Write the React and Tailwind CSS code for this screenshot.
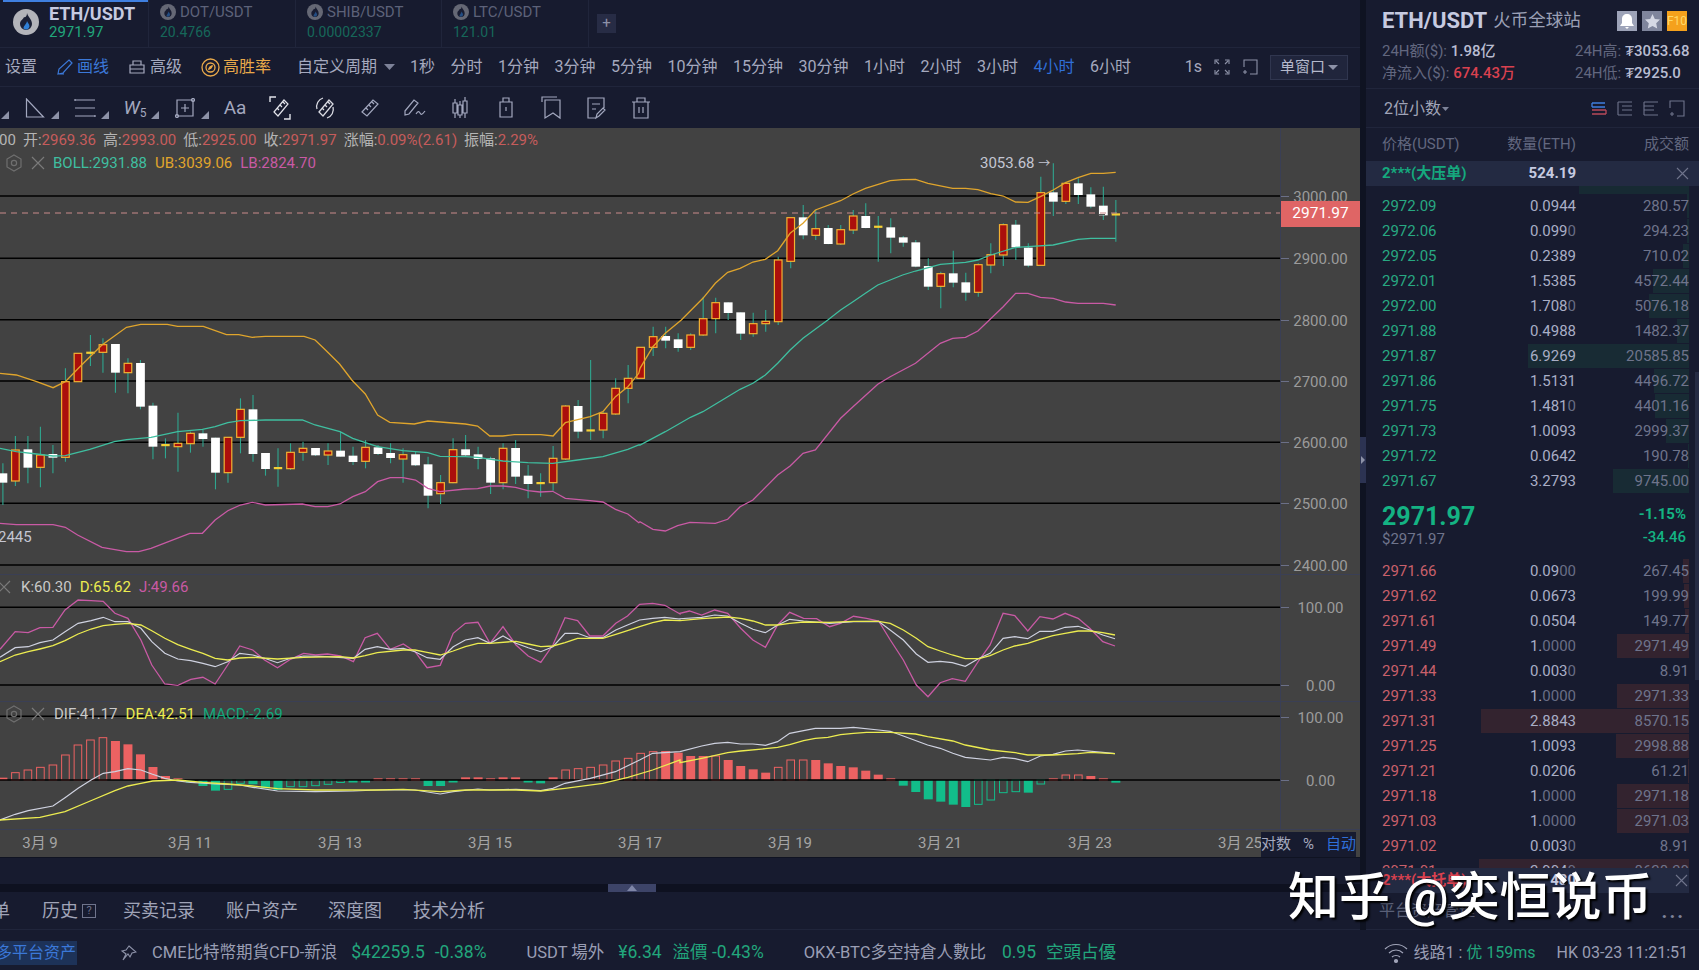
import React from 'react';

// candle data read off the chart: [bodyTop, bodyBottom, wickTop, wickBottom, kind], y in crop units
const CANDLES = [
  [1030,1058,1000,1125,'w'],[960,1053,918,1068,'r'],[958,1013,918,1060,'w'],[975,1012,890,1072,'r'],[972,983,945,1030,'w'],
  [755,982,715,995,'r'],[670,755,670,755,'r'],[668,668,615,708,'d'],[644,667,625,728,'r'],[642,728,642,788,'w'],
  [700,728,685,790,'r'],[699,830,690,838,'w'],[827,950,818,988,'w'],[945,945,925,985,'d'],[940,950,848,1025,'r'],
  [910,941,905,968,'r'],[910,927,900,950,'w'],[923,1028,923,1078,'w'],[922,1028,922,1058,'r'],[838,922,805,970,'r'],
  [838,972,795,995,'w'],[969,1017,969,1037,'w'],[1014,1014,955,1070,'d'],[967,1016,940,1020,'r'],[955,967,935,992,'r'],
  [954,976,954,978,'w'],[963,975,940,1005,'r'],[962,980,905,980,'w'],[977,996,950,1005,'w'],[952,994,930,1015,'r'],
  [952,972,945,975,'w'],[969,984,940,1000,'w'],[974,987,955,1058,'r'],[973,1006,965,1008,'w'],[1003,1097,980,1135,'w'],
  [1058,1091,1035,1122,'r'],[959,1058,925,1060,'r'],[958,976,915,978,'w'],[973,987,950,1018,'w'],[985,1058,980,1092,'w'],
  [955,1058,940,1078,'r'],[954,1040,930,1062,'w'],[1037,1062,1005,1105,'w'],[1059,1059,1030,1100,'d'],[985,1058,948,1082,'r'],
  [828,987,825,990,'r'],[828,905,810,925,'w'],[901,901,690,930,'d'],[850,900,845,925,'r'],[775,852,745,855,'r'],
  [745,775,705,820,'r'],[652,745,652,745,'r'],[620,652,590,678,'r'],[618,632,590,655,'w'],[628,654,610,665,'w'],
  [615,652,610,660,'r'],[566,615,500,618,'r'],[518,566,503,610,'r'],[517,549,517,570,'w'],[547,611,547,630,'w'],
  [581,611,548,620,'r'],[574,581,540,605,'r'],[390,575,380,585,'r'],[263,394,263,415,'r'],[262,316,225,328,'w'],
  [296,316,240,330,'r'],[294,342,285,343,'w'],[299,342,285,345,'r'],[258,300,240,312,'r'],[258,294,220,295,'w'],
  [290,290,258,395,'d'],[292,323,265,370,'w'],[322,338,318,350,'w'],[337,410,330,412,'w'],[408,470,385,480,'w'],
  [431,469,425,535,'r'],[430,458,362,472,'w'],[457,488,428,512,'w'],[404,487,400,500,'r'],[374,405,340,430,'r'],
  [284,375,280,408,'r'],[284,352,270,390,'w'],[353,407,340,412,'w'],[188,406,140,406,'r'],[187,215,100,258,'w'],
  [160,214,155,222,'r'],[160,195,145,222,'w'],[193,230,172,235,'w'],[227,256,170,270,'w'],[253,253,210,335,'d'],
];

const pts = (a, ox, fx, oy) => {
  const out = [];
  for (let i = 0; i < a.length; i += 2) out.push(`${(ox + a[i] / fx).toFixed(1)},${(oy + a[i + 1] / 3).toFixed(1)}`);
  return out;
};
const main = (l, r) => [...pts(l, 0, 2.45, 130), ...pts(r, 640, 2.178, 130)].join(' ');
const sub = (l, r) => [...pts(l, 0, 2.306, 570), ...pts(r, 680, 2.306, 570)].join(' ');

const UB = main(
  [0,730,40,735,90,755,130,773,160,755,200,705,250,645,310,592,345,583,410,583,435,589,498,589,555,614,585,614,618,622,650,619,745,619,772,630,800,663,832,702,862,750,895,792,925,855,955,877,1015,882,1048,873,1140,882,1170,888,1200,918,1232,918,1260,914,1325,914,1355,918,1385,878,1446,860,1477,845,1508,800,1538,770,1565,730],
  [0,715,28,650,55,610,90,570,137,505,164,460,191,427,218,415,246,396,273,388,300,362,327,310,355,280,382,240,437,212,464,192,491,175,545,152,572,149,600,148,627,160,681,175,709,175,736,179,764,191,791,198,818,216,845,217,872,200,900,180,927,158,954,143,982,130,1009,130,1036,127]
);
const BOLL = main(
  [0,955,40,965,90,972,130,978,160,977,220,958,280,935,310,929,370,922,435,905,496,898,527,890,558,878,589,872,650,870,741,870,772,885,833,905,864,925,925,950,987,962,1048,968,1078,979,1140,980,1170,982,1232,993,1293,998,1354,1000,1415,990,1477,980,1538,958,1565,945],
  [0,945,55,905,110,862,137,845,191,800,218,778,246,760,273,735,300,700,327,660,355,625,409,570,437,540,464,515,491,490,518,465,572,435,600,423,654,403,709,397,736,390,764,375,818,352,845,350,900,345,954,328,982,325,1036,325]
);
const LB = main(
  [0,1180,40,1184,130,1184,160,1192,190,1215,250,1252,310,1265,340,1265,370,1255,465,1210,496,1210,527,1170,558,1142,589,1125,618,1117,650,1125,741,1122,772,1130,803,1130,833,1122,864,1100,895,1085,925,1055,956,1043,987,1043,1018,1050,1048,1075,1078,1085,1140,1077,1170,1076,1201,1068,1232,1068,1263,1072,1293,1082,1323,1086,1354,1084,1385,1105,1446,1112,1477,1116,1508,1138,1538,1152,1565,1178],
  [0,1175,28,1198,55,1203,82,1187,109,1177,164,1180,191,1168,218,1130,246,1110,300,1035,327,1008,355,970,382,960,437,865,464,830,518,763,545,740,600,700,654,640,681,625,709,622,736,603,791,530,818,490,845,490,872,502,900,505,927,516,954,520,1009,520,1036,525]
);

const J = sub(
  [0,238,35,185,65,188,92,173,122,172,150,120,180,90,210,92,238,94,265,130,295,145,325,210,350,285,380,342,410,346,440,328,468,322,496,342,525,285,553,228,583,240,610,270,640,293,670,268,700,250,728,255,755,252,785,258,815,275,842,203,870,190,900,238,930,222,957,245,985,293,1015,286,1045,190,1073,160,1102,157,1130,220,1160,170,1190,225,1218,258,1247,277,1275,225,1303,143,1332,152,1360,198,1390,198,1420,160,1447,138,1475,103,1505,100,1533,106,1568,132],
  [0,130,22,123,50,135,80,120,110,130,140,175,168,210,197,232,225,165,253,127,285,145,315,146,345,170,370,160,400,139,430,145,458,153,485,210,515,270,545,345,572,380,600,338,628,326,658,334,690,270,715,225,745,130,772,137,802,183,830,140,860,147,888,130,918,145,945,175,975,215,1003,228]
);
const K = sub(
  [0,262,35,233,65,230,92,218,122,210,150,185,180,160,210,152,238,142,265,155,295,155,325,175,350,215,380,250,410,267,440,272,468,280,496,290,525,275,553,250,583,255,610,265,640,278,670,265,700,258,755,260,815,265,842,238,870,230,900,238,930,235,957,245,985,263,1015,268,1045,230,1073,210,1102,203,1130,220,1160,198,1190,220,1218,233,1247,245,1275,230,1303,190,1332,190,1360,203,1390,203,1420,180,1447,165,1475,150,1505,145,1533,142,1568,147],
  [0,146,50,142,80,135,110,138,140,160,168,178,197,188,225,165,253,148,285,153,345,160,400,155,458,154,515,210,545,252,572,277,600,274,628,278,658,289,690,265,715,250,745,205,772,200,802,206,830,184,860,184,888,172,918,169,945,180,975,195,1003,206]
);
const D = sub(
  [0,275,35,255,65,245,92,237,122,227,150,212,180,192,210,177,238,167,265,163,295,160,325,165,350,182,380,205,410,224,440,238,468,250,496,265,525,270,553,264,583,262,640,267,700,262,785,260,815,264,842,257,870,248,930,240,957,240,985,247,1015,255,1045,243,1073,230,1102,220,1130,220,1190,214,1218,222,1247,230,1275,228,1303,218,1332,205,1390,205,1420,193,1447,182,1475,170,1505,158,1533,150,1568,152],
  [0,152,50,146,110,141,140,145,168,153,197,165,225,165,253,160,285,156,345,157,400,154,458,154,485,160,515,180,545,205,572,230,600,243,628,255,658,266,690,266,715,257,745,240,772,228,802,220,830,208,860,197,888,190,918,183,945,183,975,188,1003,195]
);
const DIF = sub(
  [0,750,35,733,65,722,122,708,150,683,180,655,210,630,238,610,265,605,295,596,325,600,350,612,380,625,410,633,440,637,496,642,525,643,553,645,583,652,640,663,727,665,815,663,870,660,957,660,1015,672,1045,665,1102,657,1130,660,1190,658,1247,662,1275,655,1303,640,1361,625,1419,605,1475,570,1505,550,1568,545],
  [0,545,50,528,80,520,110,517,140,522,168,522,197,526,225,515,253,490,285,482,312,475,370,475,400,472,458,480,485,484,515,498,571,525,600,535,629,550,658,562,716,570,745,562,773,566,802,575,831,558,860,553,889,543,917,540,975,547,1003,551]
);
const DEA = sub(
  [0,750,92,742,150,725,208,693,265,662,295,648,325,640,352,633,410,630,467,637,525,642,583,648,640,656,727,660,870,660,930,658,1015,665,1073,660,1190,660,1247,663,1303,655,1390,640,1448,622,1505,600,1568,570],
  [0,578,50,565,110,548,140,543,197,536,225,532,253,524,285,512,312,505,341,502,370,494,400,490,430,487,485,487,543,492,571,500,629,513,658,525,716,540,773,548,802,555,860,555,917,551,946,547,1003,551]
);

// macd bars: [end y in crop units, filled]
const HIST = [
  [623,1],[608,0],[600,0],[592,0],[585,0],[555,0],[525,0],[510,0],[503,0],[513,1],[523,1],[553,1],[591,1],[618,1],[625,1],
  [636,1],[648,1],[662,1],[658,0],[640,0],[643,1],[655,1],[660,1],[650,0],[650,0],[647,0],[643,0],[637,0],[637,1],[635,1],
  [625,1],[625,1],[625,1],[625,1],[648,1],[648,1],[636,1],[622,1],[622,1],[625,1],[622,1],[622,1],[636,1],[640,1],[622,1],
  [600,0],[596,0],[592,0],[585,0],[573,0],[565,0],[550,0],[545,0],[543,1],[548,1],[558,1],[558,1],[558,0],[570,1],[588,1],
  [598,1],[608,1],[592,0],[570,0],[570,0],[570,1],[580,1],[588,1],[592,1],[602,1],[614,1],[625,1],[647,1],[666,1],[688,1],
  [695,1],[704,1],[711,1],[703,0],[690,0],[668,0],[665,0],[668,1],[642,0],[625,1],[615,0],[615,0],[618,1],[625,1],[638,1],
];

const ASKS = [
  ['2972.09','0.0944','280.57'],['2972.06','0.0990','294.23'],['2972.05','0.2389','710.02'],['2972.01','1.5385','4572.44'],
  ['2972.00','1.7080','5076.18'],['2971.88','0.4988','1482.37'],['2971.87','6.9269','20585.85'],['2971.86','1.5131','4496.72'],
  ['2971.75','1.4810','4401.16'],['2971.73','1.0093','2999.37'],['2971.72','0.0642','190.78'],['2971.67','3.2793','9745.00'],
];
const BIDS = [
  ['2971.66','0.0900','267.45'],['2971.62','0.0673','199.99'],['2971.61','0.0504','149.77'],['2971.49','1.0000','2971.49'],
  ['2971.44','0.0030','8.91'],['2971.33','1.0000','2971.33'],['2971.31','2.8843','8570.15'],['2971.25','1.0093','2998.88'],
  ['2971.21','0.0206','61.21'],['2971.18','1.0000','2971.18'],['2971.03','1.0000','2971.03'],['2971.02','0.0030','8.91'],
  ['2971.01','2.9040','8628.30'],
];

const PERIODS = ['1秒','分时','1分钟','3分钟','5分钟','10分钟','15分钟','30分钟','1小时','2小时','3小时','4小时','6小时'];
const DATES = ['3月 9','3月 11','3月 13','3月 15','3月 17','3月 19','3月 21','3月 23','3月 25'];

const GEAR = (
  <svg width="16" height="18" viewBox="0 0 16 18" fill="none" stroke="#6f6f6f" strokeWidth="1.2">
    <path d="M8 1l7 4v8l-7 4-7-4V5z" /><circle cx="8" cy="9" r="2.6" />
  </svg>
);
const CROSS = (
  <svg width="14" height="14" viewBox="0 0 14 14" stroke="#7a7a7a" strokeWidth="1.2"><path d="M1 1l12 12M13 1L1 13" /></svg>
);

const Flame = ({ size, dim }) => (
  <svg width={size} height={size} viewBox="0 0 26 26" className={dim ? 'opacity-50' : ''}>
    <circle cx="13" cy="13" r="13" fill="#b3b4ba" />
    <path d="M14 4c1 4 5 6 5 11a6 6 0 0 1-12 0c0-4 3-4 4-7 2 1 3-2 3-4z" fill="#1b2036" />
    <path d="M14 12c.5 2 2.500 3 2.500 5.500a3.500 3.500 0 0 1-6 2c0-3 3-4 3.500-7.500z" fill="#2f7fd6" />
  </svg>
);

const Tool = ({ w = 'w-[45.2px]', corner, children }) => (
  <div className={`relative flex h-full shrink-0 items-center justify-center ${w}`}>
    {children}
    {corner && (
      <svg width="8" height="8" viewBox="0 0 8 8" className="absolute bottom-[9px] right-[1px]"><path d="M8 0v8H0z" fill="#8d92a8" /></svg>
    )}
  </div>
);

const ic = { fill: 'none', stroke: '#a3a8bf', strokeWidth: 1.2 };

const Candles = () => (
  <>
    {CANDLES.map((c, i) => {
      const x = 2.9 + i * 12.505;
      const [t, b, wt, wb, k] = c;
      const yt = 130 + t / 3;
      const yb = 130 + b / 3;
      return (
        <g key={i}>
          <line x1={x} x2={x} y1={130 + wt / 3} y2={130 + wb / 3} stroke="#2fa68f" strokeWidth="1.1" />
          {k === 'd' && <rect x={x - 4.2} y={yt - 1} width="8.4" height="2.2" fill="#f4cf35" />}
          {k === 'w' && <rect x={x - 4.4} y={yt} width="8.8" height={yb - yt} fill="#fff" />}
          {k === 'r' && <rect x={x - 3.8} y={yt} width="7.6" height={yb - yt} fill="#ab0f0c" stroke="#f3b233" strokeWidth="1.2" />}
        </g>
      );
    })}
    <line x1={1099} x2={1105} y1={214.500} y2={214.500} stroke="#555" strokeWidth="1" />
  </>
);

const GridLine = ({ y }) => <line x1="0" x2="1280" y1={y} y2={y} stroke="#000" strokeWidth="1.500" />;

const AxisLabel = ({ y, top, text }) => (
  <>
    <div className="absolute left-0 h-px w-[8px] bg-[#6b7088]" style={{ top: y - top }} />
    <div className="absolute inset-x-0 -translate-y-1/2 text-center text-[15px] leading-5 text-[#9b9b9b]" style={{ top: y - top + 1 }}>{text}</div>
  </>
);

const Dim = ({ v }) => {
  const m = v.match(/^(.*?)(0*)$/);
  return <>{m[1]}<span className="text-[#696e86]">{m[2]}</span></>;
};

const BookRow = ({ row, color, bar, scale }) => (
  <div className="relative grid h-[25px] shrink-0 grid-cols-[110px_84px_113px] items-center text-[15px] leading-[25px]">
    <div className={`absolute inset-y-[0.5px] right-0 ${bar}`} style={{ width: parseFloat(row[2]) * scale }} />
    <div className={`relative ${color}`}>{row[0]}</div>
    <div className="relative text-right text-[#a9aec6]"><Dim v={row[1]} /></div>
    <div className="relative text-right text-[#6f748c]">{row[2]}</div>
  </div>
);

const App = () => {
  return (
    <div className="relative h-[970px] w-[1699px] overflow-hidden bg-[#171b2f] [font-family:Roboto,'Noto_Sans_CJK_SC',sans-serif]">
      <div className="flex h-[930px]">
        {/* left side */}
        <div className="flex w-[1360px] shrink-0 flex-col">
          {/* symbol tabs */}
          <div className="flex h-[48px] shrink-0 items-center border-b border-[#20253b]">
            <div className="relative flex h-full w-[149px] items-center gap-[10px] border-r border-[#20253b] pb-[3px] pl-[13px]">
              <div className="absolute left-[3px] right-0 top-0 h-[2px] bg-[#3f7fe0]" />
              <Flame size={26} />
              <div className="flex flex-col">
                <span className="text-[18px] font-bold leading-[20px] text-[#c6cae0]">ETH/USDT</span>
                <span className="text-[15px] leading-[17px] text-[#22a67c]">2971.97</span>
              </div>
            </div>
            {[['DOT/USDT','20.4766','w-[147px]'],['SHIB/USDT','0.00002337','w-[146px]'],['LTC/USDT','121.01','w-[147px]']].map(t => (
              <div key={t[0]} className={`flex h-full flex-col justify-center border-r border-[#20253b] pb-[3px] pl-[11px] ${t[2]}`}>
                <div className="flex items-center gap-[4px] text-[15px] leading-[20px] text-[#5d6279]">
                  <Flame size={16} dim />
                  {t[0]}
                </div>
                <div className="text-[14px] leading-[20px] text-[#16675a]">{t[1]}</div>
              </div>
            ))}
            <div className="ml-[8px] flex h-[19px] w-[19px] items-center justify-center bg-[#272c45] text-[15px] leading-none text-[#8d92a8]">+</div>
          </div>

          {/* period toolbar */}
          <div className="flex h-[39px] shrink-0 items-center border-b border-[#20253b] pl-[5px] pr-[12px] text-[16px] leading-none text-[#a5a9be]">
            <span>设置</span>
            <span className="ml-[19px] flex items-center gap-[3px] text-[#3b78d8]">
              <svg width="18" height="18" viewBox="0 0 18 18" fill="none" stroke="#3b78d8" strokeWidth="1.2"><path d="M13 2l3 3-9 10-5 1 1-5zM2 16h6" /></svg>
              画线
            </span>
            <span className="ml-[20px] flex items-center gap-[5px]">
              <svg width="16" height="16" viewBox="0 0 16 16" fill="none" stroke="#a5a9be" strokeWidth="1.2"><path d="M4 2h8v4H4zM1 6h14v8H1zM1 10h14" /></svg>
              高级
            </span>
            <span className="ml-[19px] flex items-center gap-[3px] text-[#e9a94a]">
              <svg width="19" height="19" viewBox="0 0 19 19" fill="none" stroke="#e9a94a" strokeWidth="1.300"><circle cx="9.500" cy="9.500" r="8.500" /><circle cx="9.500" cy="9.500" r="4.500" /><path d="M11.500 7.500L9 9l-1.500 2.500L10 10z" fill="#e9a94a" /></svg>
              高胜率
            </span>
            <span className="ml-[26px] flex items-center gap-[7px]">
              自定义周期
              <svg width="11" height="6" viewBox="0 0 11 6"><path d="M0 0h11L5.500 6z" fill="#7d8298" /></svg>
            </span>
            <div className="ml-[15px] flex gap-[15.5px]">
              {PERIODS.map(p => <span key={p} className={p === '4小时' ? 'text-[#2f6fd8]' : ''}>{p}</span>)}
            </div>
            <div className="ml-auto flex items-center">
              <span>1s</span>
              <svg width="16" height="16" viewBox="0 0 16 16" fill="none" stroke="#8d92a8" strokeWidth="1.100" className="ml-[12px]"><path d="M1 5V1h4M11 1h4v4M1 11v4h4M15 11v4h-4M2 2l3 3M14 2l-3 3M2 14l3-3M14 14l-3-3" /></svg>
              <svg width="16" height="16" viewBox="0 0 16 16" fill="none" stroke="#8d92a8" strokeWidth="1.100" className="ml-[12px]"><path d="M2 8V1h13v14H8M3 11v4M1 13h4" /></svg>
              <div className="ml-[12px] flex h-[25px] w-[78px] items-center justify-center gap-[3px] border border-[#30364f] bg-[#20253c] text-[15px] text-[#b5b9cc]">
                单窗口
                <svg width="10" height="5" viewBox="0 0 10 5"><path d="M0 0h10L5 5z" fill="#8d92a8" /></svg>
              </div>
            </div>
          </div>

          {/* drawing toolbar */}
          <div className="flex h-[41px] shrink-0 items-center">
            <div className="relative h-full w-[10px] shrink-0">
              <svg width="8" height="8" viewBox="0 0 8 8" className="absolute bottom-[9px] left-[1px]"><path d="M8 0v8H0z" fill="#8d92a8" /></svg>
            </div>
            <Tool w="w-[50px]" corner><svg width="20" height="20" viewBox="0 0 20 20" {...ic}><path d="M1.500 1v18h17z" /></svg></Tool>
            <Tool w="w-[50px]" corner><svg width="24" height="20" viewBox="0 0 24 20" {...ic}><path d="M2 2h20M2 10h20M2 18h20M2 1v2M22 17v2" /></svg></Tool>
            <Tool w="w-[50px]" corner>
              <span className="text-[19px] italic leading-none text-[#a3a8bf]">W<sub className="text-[12px] not-italic">5</sub></span>
            </Tool>
            <Tool w="w-[50px]" corner><svg width="20" height="20" viewBox="0 0 20 20" {...ic}><path d="M2 2h16v16H2zM10 6v8M6 10h8" /><circle cx="2" cy="18" r="1.500" /><circle cx="18" cy="2" r="1.500" /></svg></Tool>
            <Tool w="w-[50px]"><span className="text-[19px] leading-none text-[#a3a8bf]">Aa</span></Tool>
            <div className="-ml-[3px] flex h-full">
              <Tool><svg width="22" height="24" viewBox="0 0 22 24" fill="none" stroke="#e2e3ea" strokeWidth="1.400"><path d="M1 6V1h6M21 18v5h-6" /><path d="M5 16L15 4l4 4L9 20zM8 12l2 2M11 9l2 2M14 6l2 2" strokeWidth="1.200" /></svg></Tool>
              <Tool><svg width="22" height="24" viewBox="0 0 22 24" fill="none" stroke="#d9dae2" strokeWidth="1.300"><path d="M5 16L15 4l4 4L9 20zM8 12l2 2M11 9l2 2M14 6l2 2" /><path d="M3 13A9 9 0 0 1 9 2M19 11a9 9 0 0 1-6 11" /></svg></Tool>
              <Tool><svg width="20" height="22" viewBox="0 0 20 22" {...ic}><path d="M2 15L13 3l5 4L7 19zM6 11l2 2M9 8l2 2M12 5l2 2" /></svg></Tool>
              <Tool><svg width="24" height="22" viewBox="0 0 24 22" {...ic}><path d="M2 14L11 3l4 3-9 11-4 1zM13 17c2-3 3-3 4-1s2 2 5-2" /></svg></Tool>
              <Tool><svg width="22" height="24" viewBox="0 0 22 24" {...ic}><path d="M4 7h4v10H4zM14 5h4v12h-4zM9 9h4v10H9zM6 3v4M6 17v5M16 1v4M16 17v5M11 5v4M11 19v3" /></svg></Tool>
              <Tool><svg width="14" height="22" viewBox="0 0 14 22" {...ic}><path d="M1 5h12v15H1zM4 5V1h6v4M7 10v4" /></svg></Tool>
              <Tool><svg width="20" height="24" viewBox="0 0 20 24" {...ic}><path d="M1 6V1h15M4 4h15v18l-7-5-8 5z" /></svg></Tool>
              <Tool><svg width="20" height="24" viewBox="0 0 20 24" {...ic}><path d="M18 12V2H2v20h8M6 8h8M6 13h4M10 22l1-4 6-6 2 2-6 6z" /></svg></Tool>
              <Tool><svg width="20" height="24" viewBox="0 0 20 24" {...ic}><path d="M1 6h18M6 6V2h8v4M3 6v16h14V6M8 11v6M12 11v6" /></svg></Tool>
            </div>
          </div>

          {/* main chart */}
          <div className="flex h-[447px] shrink-0 border-b border-[#3a3f55] bg-[#424242]">
            <div className="relative w-[1280px] shrink-0 overflow-hidden">
              <svg width="1280" height="447" viewBox="0 128 1280 447" fill="none" className="block">
                {[196, 258.300, 319.700, 381, 442.300, 503.300, 565].map(y => <GridLine key={y} y={y} />)}
                <Candles />
                <line x1="0" x2="1280" y1="213" y2="213" stroke="#c98a8a" strokeWidth="1" strokeDasharray="6 5" />
                <polyline points={UB} stroke="#e0a52c" strokeWidth="1.300" />
                <polyline points={BOLL} stroke="#3fbfa0" strokeWidth="1.300" />
                <polyline points={LB} stroke="#c95aa5" strokeWidth="1.300" />
              </svg>
              <div className="absolute -left-px top-[2px] flex gap-[7px] text-[15px] leading-5 text-[#b5b5b5]">
                <span>00</span>
                <span>开:<span className="text-[#c65c5c]">2969.36</span></span>
                <span>高:<span className="text-[#c65c5c]">2993.00</span></span>
                <span>低:<span className="text-[#c65c5c]">2925.00</span></span>
                <span>收:<span className="text-[#c65c5c]">2971.97</span></span>
                <span>涨幅:<span className="text-[#c65c5c]">0.09%(2.61)</span></span>
                <span>振幅:<span className="text-[#c65c5c]">2.29%</span></span>
              </div>
              <div className="absolute left-[6px] top-[25px] flex items-center text-[15px] leading-5">
                {GEAR}
                <span className="ml-[9px]">{CROSS}</span>
                <span className="ml-[8px] text-[#3fbfa0]">BOLL:2931.88</span>
                <span className="ml-[8px] text-[#e0a52c]">UB:3039.06</span>
                <span className="ml-[8px] text-[#c95aa5]">LB:2824.70</span>
              </div>
              <div className="absolute left-[980px] top-[25px] text-[15px] leading-5 text-[#c4c6d2]">3053.68 <span className="text-[12px]">→</span></div>
              <div className="absolute -left-[2px] top-[399px] text-[15px] leading-5 text-[#c4c6d2]">2445</div>
            </div>
            <div className="relative flex-1 overflow-hidden border-l border-[#3a3f55]">
              {[[196,'3000.00'],[258.300,'2900.00'],[319.700,'2800.00'],[381,'2700.00'],[442.300,'2600.00'],[503.300,'2500.00'],[565,'2400.00']].map(a => (
                <AxisLabel key={a[1]} y={a[0]} top={128} text={a[1]} />
              ))}
              <div className="absolute inset-x-0 top-[73px] flex h-[26px] items-center justify-center bg-[#df6565] text-[15.500px] text-white">2971.97</div>
            </div>
          </div>

          {/* KDJ */}
          <div className="flex h-[127px] shrink-0 border-b border-[#3a3f55] bg-[#424242]">
            <div className="relative w-[1280px] shrink-0 overflow-hidden">
              <svg width="1280" height="127" viewBox="0 575 1280 127" fill="none" className="block">
                <GridLine y={607.300} />
                <GridLine y={685} />
                <polyline points={J} stroke="#c95aa5" strokeWidth="1.300" />
                <polyline points={K} stroke="#cfd2e0" strokeWidth="1.200" />
                <polyline points={D} stroke="#ecec50" strokeWidth="1.300" />
              </svg>
              <div className="absolute left-[-3px] top-[2px] flex items-center text-[15px] leading-5">
                {CROSS}
                <span className="ml-[10px] text-[#c9c9c9]">K:60.30</span>
                <span className="ml-[8px] text-[#ecec50]">D:65.62</span>
                <span className="ml-[8px] text-[#c95aa5]">J:49.66</span>
              </div>
            </div>
            <div className="relative flex-1 border-l border-[#3a3f55]">
              <AxisLabel y={607.300} top={575} text="100.00" />
              <AxisLabel y={685} top={575} text="0.00" />
            </div>
          </div>

          {/* MACD */}
          <div className="flex h-[128px] shrink-0 border-b border-[#3a3f55] bg-[#424242]">
            <div className="relative w-[1280px] shrink-0 overflow-hidden">
              <svg width="1280" height="128" viewBox="0 702 1280 128" fill="none" className="block">
                <GridLine y={716.300} />
                {HIST.map((h, i) => {
                  const x = 2.9 + i * 12.505;
                  const end = 570 + h[0] / 3;
                  const col = h[0] <= 626 ? '#ec6262' : '#12bd8a';
                  const top = Math.min(end, 780);
                  const ht = Math.max(Math.abs(end - 780), 2.500);
                  return h[1]
                    ? <rect key={i} x={x - 4.500} y={top} width="9" height={ht} fill={col} />
                    : <rect key={i} x={x - 3.800} y={top} width="7.600" height={ht} stroke={col} strokeWidth="1" />;
                })}
                <GridLine y={780} />
                <polyline points={DIF} stroke="#cfd2e0" strokeWidth="1.200" />
                <polyline points={DEA} stroke="#ecec50" strokeWidth="1.300" />
              </svg>
              <div className="absolute left-[6px] top-[2px] flex items-center text-[15px] leading-5">
                {GEAR}
                <span className="ml-[9px]">{CROSS}</span>
                <span className="ml-[9px] text-[#c9c9c9]">DIF:41.17</span>
                <span className="ml-[8px] text-[#ecec50]">DEA:42.51</span>
                <span className="ml-[8px] text-[#12a97c]">MACD:-2.69</span>
              </div>
            </div>
            <div className="relative flex-1 border-l border-[#3a3f55]">
              <AxisLabel y={717} top={702} text="100.00" />
              <AxisLabel y={780} top={702} text="0.00" />
            </div>
          </div>

          {/* date axis */}
          <div className="relative flex h-[27px] shrink-0 items-center overflow-hidden bg-[#424242]">
            <div className="-ml-[35px] flex">
              {DATES.map(d => <div key={d} className="w-[150px] shrink-0 text-center text-[15px] text-[#a5a5a5]">{d}</div>)}
            </div>
            <div className="absolute bottom-0 right-[4px] top-[2px] flex w-[95px] items-center justify-between bg-[#171b2f] text-[15px] text-[#a5a9be]">
              <span>对数</span>
              <span>%</span>
              <span className="text-[#2f6fd8]">自动</span>
            </div>
          </div>

          <div className="h-[27px] shrink-0 border-t border-[#0f1322]" />
          <div className="flex h-[8px] shrink-0 justify-center bg-[#0e1120] pr-[96px]">
            <div className="flex h-full w-[48px] items-center justify-center bg-[#3d4468]">
              <svg width="10" height="6" viewBox="0 0 10 6"><path d="M5 0l5 6H0z" fill="#7f86a8" /></svg>
            </div>
          </div>

          {/* bottom tabs */}
          <div className="flex h-[38px] shrink-0 items-center border-b border-[#20253b] text-[18px] leading-none text-[#a0a4b8]">
            <span className="-ml-[8px]">单</span>
            <span className="ml-[32px] flex items-center gap-[4px]">
              历史
              <span className="flex h-[14px] w-[14px] items-center justify-center border border-[#6f748c] text-[11px] text-[#6f748c]">?</span>
            </span>
            <span className="ml-[27px]">买卖记录</span>
            <span className="ml-[31px]">账户资产</span>
            <span className="ml-[30px]">深度图</span>
            <span className="ml-[31px]">技术分析</span>
          </div>
        </div>

        {/* divider */}
        <div className="relative w-[6px] shrink-0 bg-[#0f1322]">
          <div className="absolute left-0 top-[437px] flex h-[46px] w-full items-center justify-center bg-[#2c3352]">
            <svg width="4" height="8" viewBox="0 0 4 8"><path d="M0 0l4 4-4 4z" fill="#8d92a8" /></svg>
          </div>
        </div>

        {/* order book */}
        <div className="relative flex min-w-0 flex-1 flex-col pl-[16px] pr-[10px]">
          <div className="absolute bottom-[250px] right-0 top-[372px] w-[4px] bg-[#262c44]" />
          <div className="-mr-[10px] -ml-[16px] h-[89px] shrink-0 border-b border-[#20253b] pl-[16px] pr-[12px]">
            <div className="flex h-[40px] items-center pt-[2px]">
              <span className="text-[22px] font-bold leading-none text-[#c6cae0]">ETH/USDT</span>
              <span className="ml-[6px] text-[17.500px] leading-none text-[#9ba0b6]">火币全球站</span>
              <div className="ml-auto flex gap-[5px]">
                <div className="flex h-[20px] w-[20px] items-center justify-center bg-[#9da3b8]">
                  <svg width="14" height="15" viewBox="0 0 14 15" fill="#fff"><path d="M7 0c3 0 5 2 5 5v4l2 3H0l2-3V5c0-3 2-5 5-5zM5 13h4l-2 2z" /></svg>
                </div>
                <div className="flex h-[20px] w-[20px] items-center justify-center bg-[#7f859c]">
                  <svg width="15" height="15" viewBox="0 0 15 15" fill="#d5d8e4"><path d="M7.500 0l2.300 5 5.200.600-3.800 3.600 1 5.300-4.700-2.600L2.800 14.500l1-5.300L0 5.600 5.200 5z" /></svg>
                </div>
                <div className="flex h-[20px] w-[20px] items-center justify-center bg-[#f5a11c] text-[12px] leading-none text-[#ffd96a]">F10</div>
              </div>
            </div>
            <div className="flex justify-between text-[15px] leading-[22px] text-[#62677f]">
              <div>
                <div>24H额($): <span className="font-medium text-[#b9bdd2]">1.98亿</span></div>
                <div>净流入($): <span className="font-medium text-[#d9414f]">674.43万</span></div>
              </div>
              <div className="w-[112px]">
                <div className="whitespace-nowrap">24H高: <span className="font-medium text-[#b9bdd2]">₮3053.68</span></div>
                <div className="whitespace-nowrap">24H低: <span className="font-medium text-[#b9bdd2]">₮2925.0</span></div>
              </div>
            </div>
          </div>

          <div className="-ml-[16px] -mr-[10px] flex h-[39px] shrink-0 items-center border-b border-[#20253b] pl-[18px] pr-[14px] pt-[1px]">
            <span className="text-[16px] leading-none text-[#a0a4b8]">2位小数</span>
            <svg width="7" height="4" viewBox="0 0 7 4" className="ml-[1px]"><path d="M0 0h7L3.500 4z" fill="#7d8298" /></svg>
            <div className="ml-auto flex items-center gap-[10px]">
              <svg width="16" height="15" viewBox="0 0 16 15" fill="none" strokeWidth="1.300"><path d="M1 2h13M1 6h13M1 2v4" stroke="#3f7fe0" /><path d="M1 9h14M1 13h14M15 9v4" stroke="#b84a5a" /></svg>
              <svg width="16" height="15" viewBox="0 0 16 15" fill="none" stroke="#6f748c" strokeWidth="1.100"><path d="M1 1v13M1 1h14M5 5h10M5 9h10M1 14h14" /></svg>
              <svg width="16" height="15" viewBox="0 0 16 15" fill="none" stroke="#6f748c" strokeWidth="1.100"><path d="M1 1v13M1 1h14M1 5h10M1 9h10M1 14h14" /></svg>
              <svg width="16" height="17" viewBox="0 0 16 17" fill="none" stroke="#6f748c" strokeWidth="1.100"><path d="M1 8V1h14v15H8M3 12v4M1 14h4" /></svg>
            </div>
          </div>

          <div className="grid h-[33px] shrink-0 grid-cols-[110px_84px_113px] items-center text-[15px] text-[#62677f]">
            <span className="whitespace-nowrap">价格(USDT)</span>
            <span className="whitespace-nowrap text-right">数量(ETH)</span>
            <span className="text-right">成交额</span>
          </div>

          <div className="-ml-[16px] -mr-[10px] grid h-[25px] shrink-0 grid-cols-[110px_84px_113px_1fr] items-center bg-[#232a42] pl-[16px] text-[15px] font-bold">
            <span className="whitespace-nowrap text-[#15a97e]">2***(大压单)</span>
            <span className="text-right text-[#c6cae0]">524.19</span>
            <span className="flex justify-end">
              <svg width="13" height="13" viewBox="0 0 13 13" stroke="#6f748c" strokeWidth="1.100"><path d="M1 1l11 11M12 1L1 12" /></svg>
            </span>
          </div>

          <div className="relative min-h-0 flex-1 overflow-hidden">
            <div className="relative h-[7.500px]">
              <div className="absolute inset-y-0 right-0 w-[110px] bg-[#172a33]" />
            </div>
            {ASKS.map(r => <BookRow key={r[0]} row={r} color="text-[#28a882]" bar="bg-[#182b34]" scale={0.0078} />)}

            <div className="flex h-[65px] items-center justify-between pr-[3px]">
              <div>
                <div className="text-[25px] font-bold leading-[27px] text-[#14b383]">2971.97</div>
                <div className="text-[15px] leading-[19px] text-[#6f748c]">$2971.97</div>
              </div>
              <div className="text-right">
                <div className="text-[15px] font-bold leading-[23px] text-[#14b383]">-1.15%</div>
                <div className="text-[15px] font-medium leading-[23px] text-[#14b383]">-34.46</div>
              </div>
            </div>

            {BIDS.map(r => <BookRow key={r[0]} row={r} color="text-[#c9606b]" bar="bg-[#33232f]" scale={0.0243} />)}

            <div className="absolute inset-x-[-16px] bottom-0 grid h-[25px] grid-cols-[110px_84px_113px] items-center bg-[#232a42] pl-[16px] text-[15px] font-bold">
              <span className="whitespace-nowrap text-[#d9414f]">2***(大托单)</span>
              <span className="text-right text-[#c6cae0]">480</span>
              <span className="flex justify-end pr-px">
                <svg width="13" height="13" viewBox="0 0 13 13" stroke="#6f748c" strokeWidth="1.100"><path d="M1 1l11 11M12 1L1 12" /></svg>
              </span>
            </div>
          </div>

          <div className="-ml-[16px] -mr-[10px] flex h-[37px] shrink-0 items-center justify-between border-b border-[#20253b] pl-[13px] pr-[14px] text-[16px] text-[#5a6078]">
            <span>平台资产管理</span>
            <span className="text-[20px] font-bold leading-none tracking-[2px] text-[#7d8298]">...</span>
          </div>
        </div>
      </div>

      {/* status bar */}
      <div className="flex h-[40px] items-center pt-[6px] text-[16.500px] leading-none text-[#9a9eb4]">
        <div className="flex h-[24px] w-[77px] items-center justify-end overflow-hidden whitespace-nowrap bg-[#1d3258] pr-[1px] text-[16px] text-[#3b78d8]">多平台资产</div>
        <svg width="17" height="17" viewBox="0 0 17 17" fill="none" stroke="#8d92a8" strokeWidth="1.100" className="ml-[43px]"><path d="M9 1l7 6-4 1-2 4-2-3-5 6 3-6-4-3 4-1z" /></svg>
        <span className="ml-[15px] whitespace-nowrap">CME比特幣期貨CFD-新浪</span>
        <span className="ml-[14px] text-[17.500px] text-[#22a67c]">$42259.5</span>
        <span className="ml-[10px] text-[17.500px] text-[#22a67c]">-0.38%</span>
        <span className="ml-[40px] whitespace-nowrap">USDT 場外</span>
        <span className="ml-[14px] text-[17.500px] text-[#22a67c]">¥6.34</span>
        <span className="ml-[11px] text-[17.500px] text-[#22a67c]">溢價 -0.43%</span>
        <span className="ml-[40px] whitespace-nowrap">OKX-BTC多空持倉人數比</span>
        <span className="ml-[16px] text-[17.500px] text-[#22a67c]">0.95</span>
        <span className="ml-[10px] text-[17.500px] text-[#22a67c]">空頭占優</span>
        <svg width="24" height="22" viewBox="0 0 24 22" fill="none" stroke="#a0a4b8" strokeWidth="1.200" className="ml-auto"><path d="M1 7c6-6 16-6 22 0M5 11c4-4 10-4 14 0M8 15c2-2 6-2 8 0" /><circle cx="12" cy="19" r="1.500" fill="#a0a4b8" /></svg>
        <span className="ml-[5px] whitespace-nowrap text-[16px]">线路1 : <span className="text-[#22a67c]">优 159ms</span></span>
        <span className="ml-[21px] mr-[11px] whitespace-nowrap text-[16px]">HK 03-23 11:21:51</span>
      </div>

      {/* watermark */}
      <div className="absolute left-[1288px] top-[868px] whitespace-nowrap text-[51px] font-medium leading-[60px] text-white [text-shadow:2px_2px_2px_#000]">知乎 @奕恒说币</div>
    </div>
  );
};

export default App;
